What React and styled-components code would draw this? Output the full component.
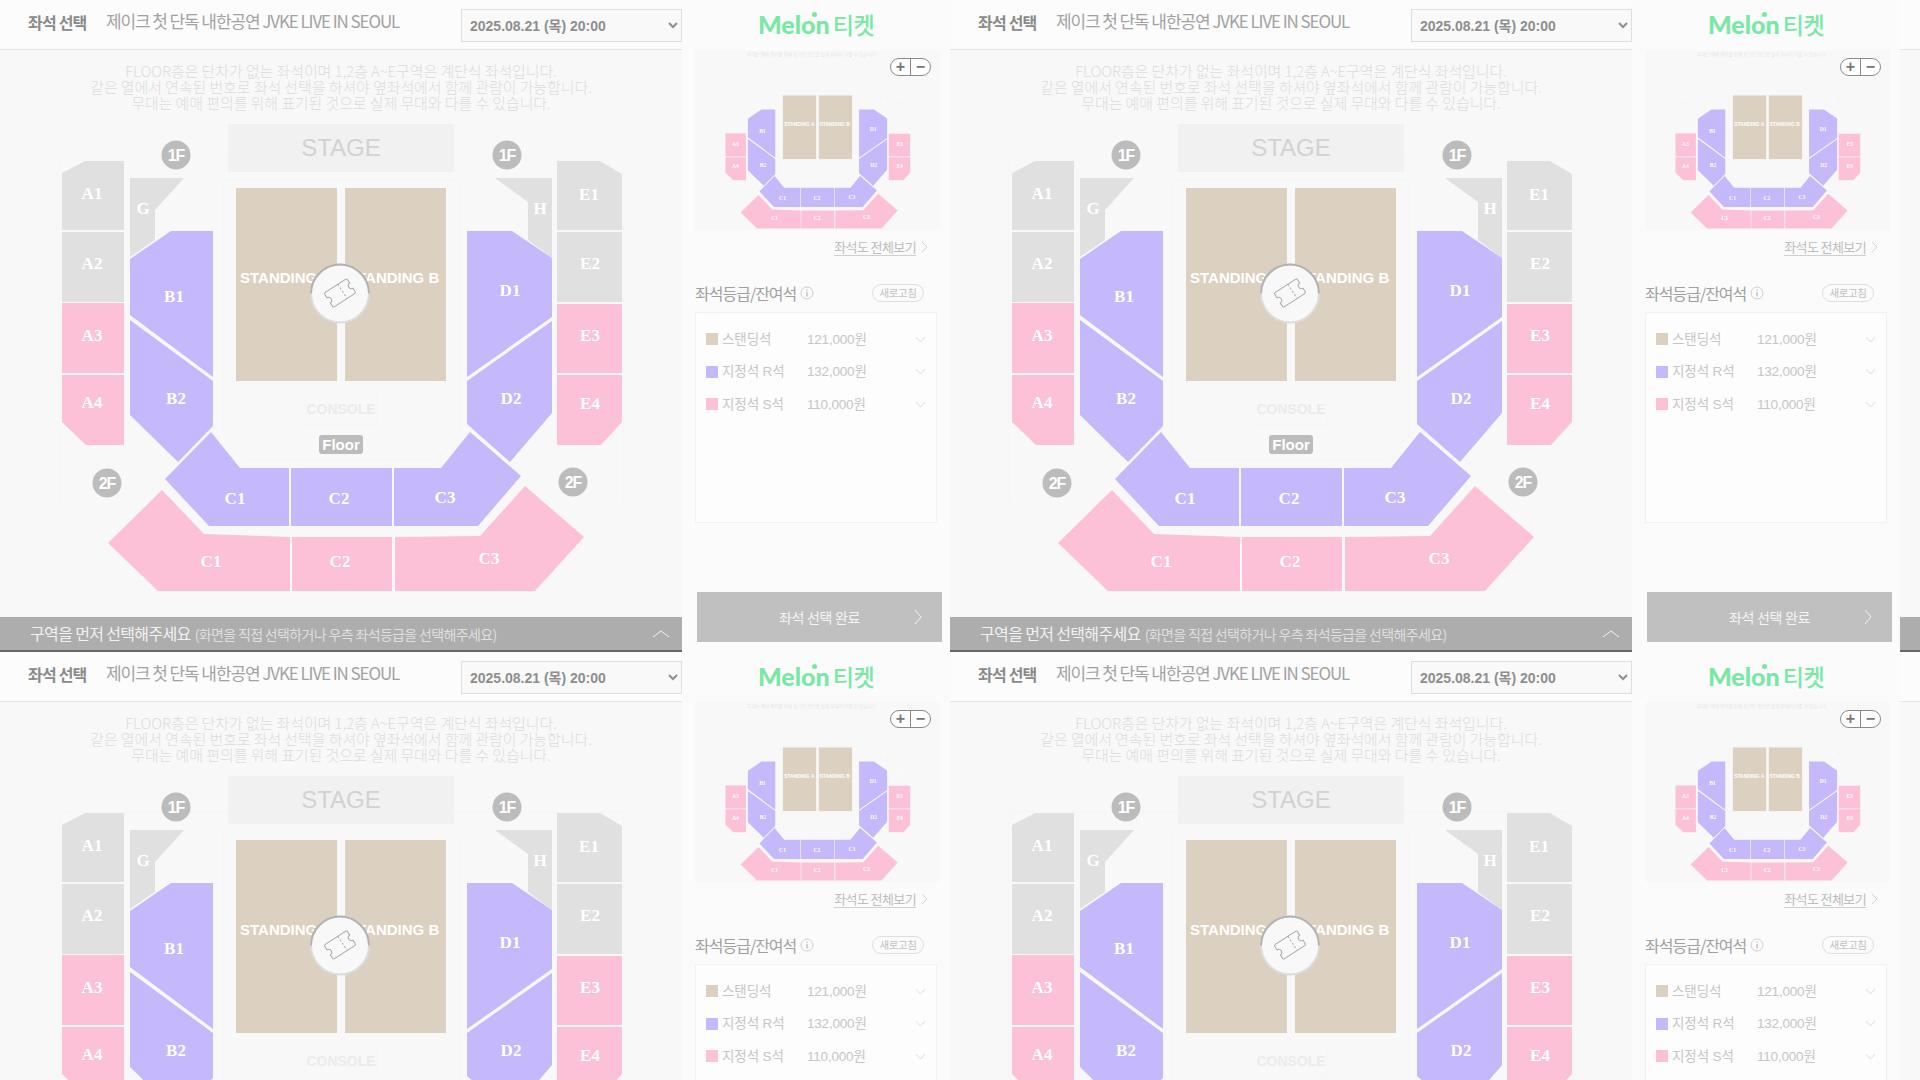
import React from "react";
import styled, { createGlobalStyle } from "styled-components";

const SANS = `"Liberation Sans", "Noto Sans CJK KR", sans-serif`;
const KR = `"Noto Sans CJK KR", "Noto Sans", sans-serif`;
const SERIF = `"Liberation Serif", serif`;

const COLORS = {
  grey: "#e0e0e0",
  purple: "#c5b8fb",
  pink: "#fcc1d7",
  tan: "#dcd0c0",
};

const SEATS = [
  { kind: "grey", label: "A1", x: 92, y: 193, points: "62,173 85,161 124,161 124,230 62,230" },
  { kind: "grey", label: "A2", x: 92, y: 263, points: "62,232 124,232 124,302 62,302" },
  { kind: "pink", label: "A3", x: 92, y: 335, points: "62,303 124,303 124,373 62,373" },
  { kind: "pink", label: "A4", x: 92, y: 402, points: "62,375 124,375 124,445 86,445 62,422" },
  { kind: "grey", label: "G", x: 143, y: 208, points: "130,178 184,178 155,210 155,240 130,257" },
  { kind: "grey", label: "H", x: 540, y: 208, points: "495,178 552,178 552,258 528,240 528,202" },
  { kind: "grey", label: "E1", x: 589, y: 194, points: "557,161 600,161 622,174 622,230 557,230" },
  { kind: "grey", label: "E2", x: 590, y: 263, points: "557,232 622,232 622,302 557,302" },
  { kind: "pink", label: "E3", x: 590, y: 335, points: "557,304 622,304 622,373 557,373" },
  { kind: "pink", label: "E4", x: 590, y: 403, points: "557,375 622,375 622,422 601,445 557,445" },
  { kind: "purple", label: "B1", x: 174, y: 296, points: "171,231 213,231 213,377 130,315 130,259" },
  { kind: "purple", label: "B2", x: 176, y: 398, points: "130,320 213,381 213,426 178,462 130,415" },
  { kind: "purple", label: "D1", x: 510, y: 290, points: "467,231 512,231 552,258 552,317 467,377" },
  { kind: "purple", label: "D2", x: 511, y: 398, points: "552,321 467,381 467,424 510,462 552,413" },
  { kind: "purple", label: "C1", x: 235, y: 498, points: "211,432 240,468 289,468 289,526 209,526 165,479" },
  { kind: "purple", label: "C2", x: 339, y: 498, points: "291,468 392,468 392,526 291,526" },
  { kind: "purple", label: "C3", x: 445, y: 497, points: "394,468 441,468 470,432 521,476 478,526 394,526" },
  { kind: "pink", label: "C1", x: 211, y: 561, points: "162,490 204,534 290,537 290,591 158,591 108,543" },
  { kind: "pink", label: "C2", x: 340, y: 561, points: "292,537 392,537 392,591 292,591" },
  { kind: "pink", label: "C3", x: 489, y: 558, points: "395,537 480,536 525,486 584,537 535,591 395,591" },
];

const LEVELS = [
  { label: "1F", x: 176, y: 155 },
  { label: "1F", x: 507, y: 155 },
  { label: "2F", x: 107, y: 483 },
  { label: "2F", x: 573, y: 482 },
];

const GRADES = [
  { color: COLORS.tan, name: "스탠딩석", price: "121,000원" },
  { color: COLORS.purple, name: "지정석 R석", price: "132,000원" },
  { color: COLORS.pink, name: "지정석 S석", price: "110,000원" },
];

const GlobalStyle = createGlobalStyle`
  html, body {
    margin: 0;
    padding: 0;
    background: #fcfcfc;
  }
`;

const Sheet = styled.div`
  width: 1920px;
  height: 1080px;
  overflow: hidden;
  display: grid;
  grid-template-columns: repeat(3, 950px);
  grid-auto-rows: 652px;
`;

const Tile = styled.div`
  display: flex;
  width: 950px;
  height: 652px;
`;

const LeftPane = styled.div`
  width: 682px;
  display: flex;
  flex-direction: column;
  background: #f8f8f8;
`;

const Header = styled.div`
  height: 50px;
  box-sizing: border-box;
  display: flex;
  align-items: flex-start;
  padding-left: 28px;
  background: #fcfcfc;
  border-bottom: 1px solid #e4e4e4;
`;

const PageTitle = styled.h1`
  margin: 10px 0 0;
  width: 78px;
  font: 700 16px/24px ${KR};
  letter-spacing: -0.8px;
  color: #8a8a8a;
`;

const ShowTitle = styled.div`
  margin-top: 9px;
  width: 355px;
  font: 400 17px/24px ${KR};
  letter-spacing: -1.1px;
  color: #a2a2a2;
`;

const DateSelect = styled.select`
  width: 221px;
  height: 33px;
  margin-top: 9px;
  padding-left: 4px;
  font: 700 14px ${SANS};
  color: #8e8e8e;
  background: #f9f9f9;
  border: 1px solid #dedede;
  border-radius: 0;
`;

const Notice = styled.p`
  margin: 0;
  height: 61px;
  box-sizing: border-box;
  padding-top: 13px;
  text-align: center;
  font: 300 15px/16px ${KR};
  letter-spacing: -0.1px;
  color: #dcdcdc;
`;

const MapSvg = styled.svg`
  display: block;
  flex: none;
  overflow: visible;
`;

const Seat = styled.polygon`
  fill: ${(p) => (p.$hidden ? "transparent" : COLORS[p.$kind])};
`;

const SeatLabel = styled.text`
  font: 700 17px ${SERIF};
  fill: #fff;
  text-anchor: middle;
  dominant-baseline: central;
  opacity: ${(p) => (p.$faint ? 0.6 : 1)};
`;

const StandingBlock = styled.rect`
  fill: ${COLORS.tan};
`;

const StandingLabel = styled.text`
  font: 700 15px ${SANS};
  fill: #fff;
  dominant-baseline: central;
`;

const Outline = styled.polygon`
  fill: none;
  stroke: #f5f5f5;
  stroke-width: 1;
`;

const StageBox = styled.rect`
  fill: #f1f1f1;
`;

const StageText = styled.text`
  font: 400 24px ${SANS};
  fill: #d2d2d2;
  text-anchor: middle;
  dominant-baseline: central;
`;

const ConsoleBox = styled.rect`
  fill: none;
  stroke: #f5f5f5;
`;

const ConsoleText = styled.text`
  font: 700 14px ${SANS};
  fill: #ebebeb;
  text-anchor: middle;
  dominant-baseline: central;
`;

const FloorBadge = styled.rect`
  fill: #bcbcbc;
`;

const FloorText = styled.text`
  font: 700 15px ${SANS};
  fill: #fff;
  text-anchor: middle;
  dominant-baseline: central;
`;

const LevelDot = styled.circle`
  fill: #bcbcbc;
`;

const LevelText = styled.text`
  font: 700 16px ${SANS};
  letter-spacing: -1px;
  fill: #fff;
  text-anchor: middle;
  dominant-baseline: central;
`;

const TicketDisc = styled.circle`
  fill: #f8f8f8;
  stroke: #dcdcdc;
  stroke-width: 2;
`;

const TicketRim = styled.path`
  fill: none;
  stroke: #b2b2b2;
  stroke-width: 2;
`;

const TicketLine = styled.path`
  fill: none;
  stroke: #a8a8a8;
  stroke-width: 1;
`;

const MiniNote = styled.text`
  font: 300 14px ${KR};
  fill: #dedede;
`;

const Bar = styled.div`
  height: 35px;
  box-sizing: border-box;
  display: flex;
  align-items: center;
  justify-content: space-between;
  padding: 0 12px 0 30px;
  background: #adadad;
  border-bottom: 2px solid #666;
`;

const BarText = styled.div`
  font: 400 16px/24px ${KR};
  letter-spacing: -0.65px;
  color: #f2f2f2;
`;

const BarHint = styled.span`
  margin-left: 4px;
  font-size: 14px;
  letter-spacing: -0.65px;
  color: #dfdfdf;
`;

const RightPane = styled.div`
  width: 268px;
  box-sizing: border-box;
  padding-left: 13px;
  display: flex;
  flex-direction: column;
  background: #fbfbfb;
`;

const Logo = styled.div`
  height: 48px;
  padding-bottom: 2px;
  margin-left: -13px;
  display: flex;
  justify-content: center;
  align-items: center;
  color: #78e8a4;
`;

const LogoMark = styled.span`
  position: relative;
  font: 900 25px/30px "Lato", sans-serif;
`;

const LogoDot = styled.i`
  position: absolute;
  left: 54px;
  top: 3px;
  width: 5px;
  height: 5px;
  border-radius: 50%;
  background: #78e8a4;
`;

const LogoKr = styled.span`
  margin-left: 3px;
  font: 500 23px/30px ${KR};
  letter-spacing: -0.5px;
`;

const MiniMap = styled.div`
  position: relative;
  width: 245px;
  height: 180px;
  box-sizing: border-box;
  padding: 20px 0 0 10px;
  overflow: hidden;
  background: #f8f8f8;
`;

const ZoomPill = styled.div`
  position: absolute;
  top: 8px;
  right: 9px;
  width: 41px;
  height: 18px;
  box-sizing: border-box;
  display: flex;
  background: #fff;
  border: 1px solid #8a8a8a;
  border-radius: 9px;
`;

const ZoomButton = styled.span`
  flex: 1;
  display: flex;
  align-items: center;
  justify-content: center;
  font: 700 16px/1 ${SANS};
  color: #777;
  & + & {
    border-left: 1px solid #8a8a8a;
  }
`;

const OverviewLink = styled.div`
  align-self: flex-end;
  margin: 8px 22px 0 0;
  display: flex;
  align-items: center;
  gap: 5px;
`;

const OverviewText = styled.span`
  font: 400 13px/17px ${KR};
  letter-spacing: -0.6px;
  color: #bdbdbd;
  border-bottom: 1px solid #cfcfcf;
`;

const GradeHead = styled.div`
  margin-top: 26px;
  height: 22px;
  display: flex;
  align-items: center;
`;

const GradeTitle = styled.h2`
  margin: 0;
  font: 400 16px/22px ${KR};
  letter-spacing: -1px;
  color: #a0a0a0;
`;

const InfoIcon = styled.svg`
  margin-left: 4px;
  flex: none;
`;

const RefreshButton = styled.span`
  margin-left: auto;
  margin-right: 26px;
  width: 52px;
  height: 18px;
  box-sizing: border-box;
  display: flex;
  align-items: center;
  justify-content: center;
  font: 400 10.5px/1 ${KR};
  letter-spacing: -0.4px;
  color: #c0c0c0;
  border: 1px solid #dedede;
  border-radius: 9px;
`;

const GradeList = styled.ul`
  margin: 8px 0 0;
  padding: 10px 0 0 10px;
  width: 242px;
  height: 211px;
  box-sizing: border-box;
  list-style: none;
  border: 1px solid #f2f2f2;
  background: #fdfdfd;
`;

const GradeRow = styled.li`
  height: 32.5px;
  display: flex;
  align-items: center;
  font: 400 13.5px/1 ${SANS};
  color: #c6c6c6;
`;

const Swatch = styled.i`
  width: 12px;
  height: 12px;
  margin-right: 4px;
  background: ${(p) => p.$color};
`;

const GradeName = styled.span`
  width: 85px;
  letter-spacing: -0.1px;
`;

const GradePrice = styled.span`
  flex: 1;
  letter-spacing: -0.2px;
`;

const GradeChevron = styled.svg`
  margin-right: 10px;
`;

const DoneButton = styled.div`
  position: relative;
  margin: 69px 0 0 2px;
  width: 245px;
  height: 50px;
  display: flex;
  align-items: center;
  justify-content: center;
  font: 400 14px/1 ${KR};
  letter-spacing: -0.3px;
  color: #f4f4f4;
  background: #c0c0c0;
`;

const DoneChevron = styled.svg`
  position: absolute;
  right: 20px;
  top: 17px;
`;

function SeatMap({ mini }) {
  return (
    <MapSvg
      viewBox="0 111 682 506"
      width={mini ? 225 : 682}
      height={mini ? 167 : 506}
    >
      {mini ? (
        <MiniNote x="127" y="68">
          무대는 예매 편의를 위해 표기된 것으로 실제 무대와 다를 수 있습니다.
        </MiniNote>
      ) : (
        <>
          <Outline points="59,160 59,502 158,592 535,592 624,502 624,160" />
          <Outline points="223,180 223,433 243,460 437,460 459,433 459,180" />
          <StageBox x="228" y="124" width="226" height="48" />
          <StageText x="341" y="147">STAGE</StageText>
          <ConsoleBox x="305" y="394" width="72" height="31" />
          <ConsoleText x="341" y="409">CONSOLE</ConsoleText>
          <FloorBadge x="319" y="435" width="44" height="19" rx="3" />
          <FloorText x="341" y="444">Floor</FloorText>
          {LEVELS.map((l) => (
            <g key={`${l.label}${l.x}`}>
              <LevelDot cx={l.x} cy={l.y} r="14.5" />
              <LevelText x={l.x} y={l.y}>{l.label}</LevelText>
            </g>
          ))}
        </>
      )}
      <StandingBlock x="236" y="188" width="101" height="193" />
      <StandingBlock x="345" y="188" width="101" height="193" />
      <StandingLabel x="240" y="277">STANDING A</StandingLabel>
      <StandingLabel x="347" y="277">STANDING B</StandingLabel>
      {SEATS.map((s) => {
        const hidden = mini && s.kind === "grey";
        return (
          <g key={`${s.kind}${s.label}`}>
            <Seat points={s.points} $kind={s.kind} $hidden={hidden} />
            <SeatLabel x={s.x} y={s.y} $faint={hidden}>{s.label}</SeatLabel>
          </g>
        );
      })}
      {!mini && (
        <g>
          <TicketDisc cx="340" cy="293.5" r="29" />
          <TicketRim d="M311,293.5 A29,29 0 0 1 369,293.5" />
          <g transform="translate(340 293) rotate(-33)">
            <TicketLine d="M-12,-8.5 H12 Q13.5,-8.5 13.5,-7 V-3 A3 3 0 0 0 13.5,3 V7 Q13.5,8.5 12,8.5 H-12 Q-13.5,8.5 -13.5,7 V3 A3 3 0 0 0 -13.5,-3 V-7 Q-13.5,-8.5 -12,-8.5 Z" />
            <TicketLine d="M3,-8.5 V8.5" strokeDasharray="2 2" />
          </g>
        </g>
      )}
    </MapSvg>
  );
}

function Chevron({ as: Comp = "svg", width, height, points, color, ...rest }) {
  return (
    <Comp width={width} height={height} viewBox={`0 0 ${width} ${height}`} {...rest}>
      <polyline points={points} fill="none" stroke={color} strokeWidth="1" />
    </Comp>
  );
}

function SeatPanel() {
  return (
    <Tile>
      <LeftPane>
        <Header>
          <PageTitle>좌석 선택</PageTitle>
          <ShowTitle>제이크 첫 단독 내한공연 JVKE LIVE IN SEOUL</ShowTitle>
          <DateSelect defaultValue="a">
            <option value="a">2025.08.21 (목) 20:00</option>
          </DateSelect>
        </Header>
        <Notice>
          FLOOR층은 단차가 없는 좌석이며 1,2층 A~E구역은 계단식 좌석입니다.
          <br />
          같은 열에서 연속된 번호로 좌석 선택을 하셔야 옆좌석에서 함께 관람이 가능합니다.
          <br />
          무대는 예매 편의를 위해 표기된 것으로 실제 무대와 다를 수 있습니다.
        </Notice>
        <SeatMap />
        <Bar>
          <BarText>
            구역을 먼저 선택해주세요
            <BarHint>(화면을 직접 선택하거나 우측 좌석등급을 선택해주세요)</BarHint>
          </BarText>
          <Chevron width={18} height={10} points="1,8 9,2 17,8" color="#f2f2f2" />
        </Bar>
      </LeftPane>
      <RightPane>
        <Logo>
          <LogoMark>
            Melon
            <LogoDot />
          </LogoMark>
          <LogoKr>티켓</LogoKr>
        </Logo>
        <MiniMap>
          <SeatMap mini />
          <ZoomPill>
            <ZoomButton>+</ZoomButton>
            <ZoomButton>−</ZoomButton>
          </ZoomPill>
        </MiniMap>
        <OverviewLink>
          <OverviewText>좌석도 전체보기</OverviewText>
          <Chevron width={7} height={12} points="1,1 6,6 1,11" color="#d2d2d2" />
        </OverviewLink>
        <GradeHead>
          <GradeTitle>좌석등급/잔여석</GradeTitle>
          <InfoIcon width="14" height="14" viewBox="0 0 14 14">
            <circle cx="7" cy="7" r="6" fill="none" stroke="#cfcfcf" />
            <rect x="6.4" y="6" width="1.2" height="4.5" fill="#b8b8b8" />
            <rect x="6.4" y="3.6" width="1.2" height="1.3" fill="#b8b8b8" />
          </InfoIcon>
          <RefreshButton>새로고침</RefreshButton>
        </GradeHead>
        <GradeList>
          {GRADES.map((g) => (
            <GradeRow key={g.name}>
              <Swatch $color={g.color} />
              <GradeName>{g.name}</GradeName>
              <GradePrice>{g.price}</GradePrice>
              <Chevron as={GradeChevron} width={11} height={7} points="1,1 5.5,6 10,1" color="#dcdcdc" />
            </GradeRow>
          ))}
        </GradeList>
        <DoneButton>
          좌석 선택 완료
          <Chevron as={DoneChevron} width={8} height={16} points="1,1 7,8 1,15" color="#f4f4f4" />
        </DoneButton>
      </RightPane>
    </Tile>
  );
}

export default function App() {
  return (
    <>
      <GlobalStyle />
      <Sheet>
        {[0, 1, 2, 3, 4, 5].map((n) => (
          <SeatPanel key={n} />
        ))}
      </Sheet>
    </>
  );
}
